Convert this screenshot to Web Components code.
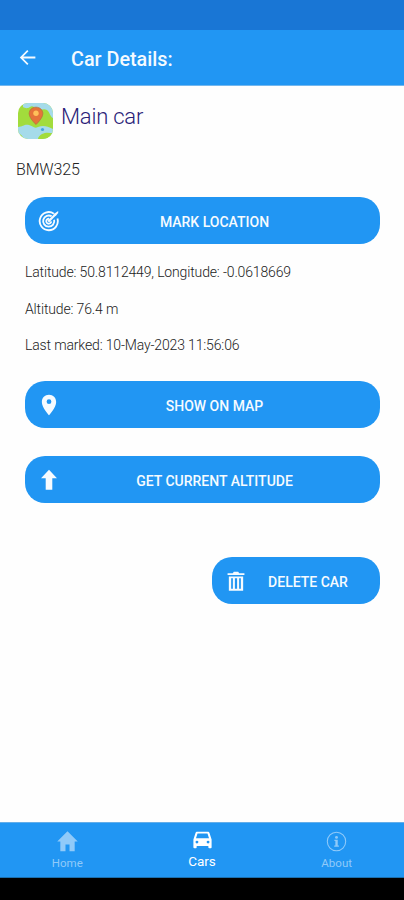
<!DOCTYPE html>
<html lang="en">
<head>
<meta charset="utf-8">
<title>Car Details</title>
<style>
    body {
        margin: 0;
        background: #fefefe;
        font-family: Roboto, "Liberation Sans", sans-serif;
    }
</style>
</head>
<body>
<car-app></car-app>
<script>
const icons = {
    back: '<path d="M21 10.9H7.1l6-6L11.7 3.5 3.2 12l8.5 8.5 1.4-1.4-6-6H21z"/>',
    target: `<g fill="none" stroke="currentColor" stroke-width="2">
        <path d="M17.3 4A9.9 9.9 0 1 0 21.2 9.3"/>
        <path d="M14.9 6.9A6.1 6.1 0 1 0 17.6 10.6"/>
        <path d="M12.2 9.6a2.7 2.7 0 1 0 2.2 2.8"/>
        <path d="M11.2 12.7 19.5 4.4" stroke-width="2.4"/>
        </g><path d="M17.3 4.3 22 1v2.4l-2.6 3-2.3-.4z"/>`,
    pin: '<path fill-rule="evenodd" d="M12 .8C7.5 .8 4.2 4.2 4.2 8.6 4.2 14.6 12 23.2 12 23.2s7.8-8.6 7.8-14.6C19.8 4.2 16.5.8 12 .8zm0 5a2.6 2.6 0 1 1 0 5.2 2.6 2.6 0 0 1 0-5.2z"/>',
    up: '<path d="M12 .8 20.7 10H15.6v12.5H8.4V10H3.3z"/>',
    trash: '<path d="M2.8 3.5h5.7L9.6 2h4.8l1.1 1.5h5.7v2H2.8z"/><path fill-rule="evenodd" d="M4.2 7h15.6v15.5H4.2zm2.5 2.1v11.3h1.9V9.1zm4.1 0v11.3h2.4V9.1zm4.6 0v11.3h1.9V9.1z"/>',
    home: '<path d="M12 1.2 1.3 12h3.2v10.3h5.4V15h4.2v7.3h5.4V12h3.2z"/>',
    car: '<path fill-rule="evenodd" d="M6.5 4h11c.9 0 1.5.5 1.8 1.3L21.5 12v8c0 .7-.4 1.1-1.1 1.1h-1.2c-.7 0-1.1-.4-1.1-1.1v-1.2H5.900V20c0 .7-.4 1.100-1.100 1.100H3.600c-.7 0-1.100-.4-1.100-1.100v-8l2.200-6.700C5 4.500 5.600 4 6.500 4zM6.800 5.800 5.200 10.800h13.600l-1.600-5zM6.200 13.200a1.500 1.500 0 1 0 0 3 1.500 1.500 0 0 0 0-3zm11.600 0a1.500 1.500 0 1 0 0 3 1.500 1.500 0 0 0 0-3z"/>',
    info: '<circle cx="12" cy="12" r="9.6" fill="none" stroke="currentColor" stroke-width="1.1"/><circle cx="12" cy="7.7" r="1.5"/><path d="M9.8 10.3h3.5v6h1.2v1.3H9.6v-1.3h1.2v-4.7h-1z"/>'
}

class CarIcon extends HTMLElement {
    constructor() {
        super()
        const shadowRoot = this.attachShadow({mode: 'open'})
        shadowRoot.innerHTML = `
            <style>
                :host {
                    display: block;
                    flex: none;
                    width: var(--iconSize, 24px);
                    height: var(--iconSize, 24px);
                }
                svg {
                    display: block;
                    width: 100%;
                    height: 100%;
                    fill: currentColor;
                }
            </style>
            <svg viewBox="0 0 24 24">${icons[this.getAttribute('name')]}</svg>
        `
    }
}

class MapLogo extends HTMLElement {
    constructor() {
        super()
        const shadowRoot = this.attachShadow({mode: 'open'})
        shadowRoot.innerHTML = `
            <style>
                :host {
                    display: block;
                    flex: none;
                    width: 35px;
                    height: 36px;
                    border-radius: 10px;
                    overflow: hidden;
                }
                svg {
                    display: block;
                }
            </style>
            <svg width="35" height="36" viewBox="0 0 35 36">
                <path fill="#a2dc3c" d="M0 0h35v36H0z"/>
                <path fill="#a5dbea" d="M5 0h30v15c-3-1-3-6-6-8-4-2-6 1-10-1-3-1-4-4-7-2-3 2-5 1-7 0z"/>
                <path fill="#a5dbea" d="M0 24c5 0 6-3 11-2 4 1 5 4 9 2 5-2 9-1 15 2v6c-4 0-5 1-7 4H5c0-3-2-5-5-5z"/>
                <path fill="#a2dc3c" d="M24 31c4-2 7-1 11-1v6H20c0-2 2-4 4-5z"/>
                <circle cx="24.5" cy="26.5" r="1.6" fill="#42a5dd"/>
                <path fill="#e5733a" stroke="#b9703c" stroke-width=".8" d="M18 4.2c-4 0-6.8 2.8-6.8 6.5 0 4.5 6.8 10.8 6.8 10.8s6.8-6.3 6.8-10.8c0-3.7-2.8-6.5-6.8-6.5z"/>
                <circle cx="18" cy="10.3" r="2.7" fill="#ffc15a"/>
            </svg>
        `
    }
}

class AppBar extends HTMLElement {
    constructor() {
        super()
        const shadowRoot = this.attachShadow({mode: 'open'})
        shadowRoot.innerHTML = `
            <style>
                :host {
                    display: flex;
                    align-items: center;
                    box-sizing: border-box;
                    height: 86px;
                    padding: 30px 0 0 17px;
                    gap: 33px;
                    border-bottom: 1px solid #73b7ee;
                    background: linear-gradient(#1976d5 30px, #2196f3 30px);
                    color: #f4faff;
                    --iconSize: 21px;
                }
                h1 {
                    margin: 4px 0 0;
                    font-size: 19.8px;
                    font-weight: 500;
                    line-height: 24px;
                }
            </style>
            <car-icon name="back"></car-icon>
            <h1><slot></slot></h1>
        `
    }
}

class ActionButton extends HTMLElement {
    constructor() {
        super()
        const shadowRoot = this.attachShadow({mode: 'open'})
        shadowRoot.innerHTML = `
            <style>
                :host {
                    display: block;
                    --iconSize: 22px;
                }
                button {
                    display: flex;
                    align-items: center;
                    box-sizing: border-box;
                    width: 100%;
                    height: 47px;
                    padding: 0 11px 0 13px;
                    border: 0;
                    border-radius: 20px;
                    background: #2196f3;
                    color: #f6fbff;
                    font: 500 14px/20px Roboto, "Liberation Sans", sans-serif;
                }
                .label {
                    flex: 1;
                    padding-top: 2px;
                    text-align: center;
                    white-space: nowrap;
                }
            </style>
            <button>
                <car-icon name="${this.getAttribute('icon')}"></car-icon>
                <span class="label"><slot></slot></span>
            </button>
        `
    }
}

class NavItem extends HTMLElement {
    constructor() {
        super()
        const shadowRoot = this.attachShadow({mode: 'open'})
        shadowRoot.innerHTML = `
            <style>
                :host {
                    display: flex;
                    flex: 1;
                    flex-direction: column;
                    align-items: center;
                    padding-top: 7px;
                    color: #90caf9;
                    font-size: 11.5px;
                    line-height: 16px;
                    --iconSize: 23px;
                }
                :host([active]) {
                    padding-top: 5px;
                    color: #fff;
                    font-size: 13.5px;
                }
                span {
                    margin-top: 2px;
                }
            </style>
            <car-icon name="${this.getAttribute('icon')}"></car-icon>
            <span><slot></slot></span>
        `
    }
}

class CarApp extends HTMLElement {
    constructor() {
        super()
        const shadowRoot = this.attachShadow({mode: 'open'})
        shadowRoot.innerHTML = `
            <style>
                :host {
                    display: flex;
                    flex-direction: column;
                    height: 900px;
                    color: #222;
                }
                main {
                    flex: 1;
                    padding: 17px 24px 0 25px;
                }
                header {
                    display: flex;
                    gap: 8px;
                    margin-left: -7px;
                }
                h2 {
                    margin: 0;
                    color: #2b1d78;
                    font-size: 22px;
                    font-weight: 300;
                    letter-spacing: -0.2px;
                    line-height: 28px;
                }
                p {
                    margin: 0;
                    font-size: 14px;
                    font-weight: 300;
                    letter-spacing: -0.15px;
                    line-height: 20px;
                }
                .model {
                    margin: 21px 0 17px -9px;
                    font-size: 16px;
                }
                .facts {
                    display: grid;
                    gap: 16.5px;
                    padding: 18px 0 26px;
                }
                .altitude {
                    margin-top: 28px;
                }
                .delete {
                    width: 168px;
                    margin: 54px 0 0 auto;
                }
                nav {
                    display: flex;
                    box-sizing: border-box;
                    height: 56px;
                    border-top: 1px solid #63aeea;
                    border-bottom: 1px solid #1a6fae;
                    background: #2196f3;
                }
                footer {
                    height: 22px;
                    background: #000;
                }
            </style>
            <app-bar>Car Details:</app-bar>
            <main>
                <header>
                    <map-logo></map-logo>
                    <h2>Main car</h2>
                </header>
                <p class="model">BMW325</p>
                <action-button icon="target">MARK LOCATION</action-button>
                <div class="facts">
                    <p>Latitude: 50.8112449, Longitude: -0.0618669</p>
                    <p>Altitude: 76.4 m</p>
                    <p>Last marked: 10-May-2023 11:56:06</p>
                </div>
                <action-button icon="pin">SHOW ON MAP</action-button>
                <action-button class="altitude" icon="up">GET CURRENT ALTITUDE</action-button>
                <action-button class="delete" icon="trash">DELETE CAR</action-button>
            </main>
            <nav>
                <nav-item icon="home">Home</nav-item>
                <nav-item icon="car" active>Cars</nav-item>
                <nav-item icon="info">About</nav-item>
            </nav>
            <footer></footer>
        `
    }
}

customElements.define('car-icon', CarIcon)
customElements.define('map-logo', MapLogo)
customElements.define('app-bar', AppBar)
customElements.define('action-button', ActionButton)
customElements.define('nav-item', NavItem)
customElements.define('car-app', CarApp)
</script>
</body>
</html>
